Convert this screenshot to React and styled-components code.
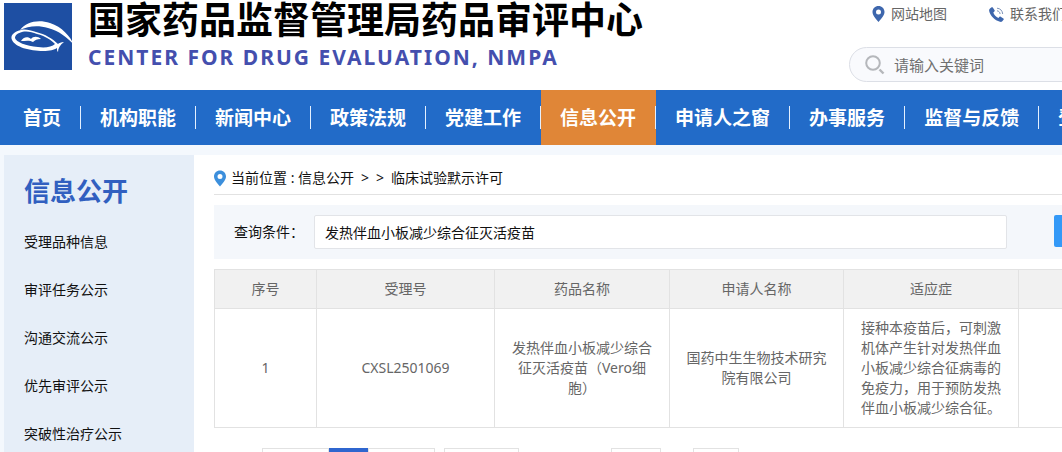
import styled, { createGlobalStyle } from "styled-components";

const GlobalStyle = createGlobalStyle`
  * {
    box-sizing: border-box;
  }
  body {
    margin: 0;
    overflow: hidden;
    background-color: #f4f8fd;
    color: #111;
    font-family: "Noto Sans", "Noto Sans CJK SC", sans-serif;
    font-size: 14px;
    line-height: 20px;
  }
  button,
  input {
    font: inherit;
    color: inherit;
  }
  a {
    color: inherit;
    text-decoration: none;
  }
`;

const Page = styled.div`
  min-width: 1200px;
`;

const Header = styled.header`
  display: flex;
  justify-content: space-between;
  height: 90px;
  padding-left: 4px;
  background-color: #fff;
`;

const Brand = styled.div`
  display: flex;
  gap: 16px;
  padding-top: 3px;
`;

const BrandText = styled.div`
  display: flex;
  flex-direction: column;
  white-space: nowrap;
`;

const BrandTitle = styled.h1`
  margin: 0;
  color: #000;
  font-size: 37px;
  font-weight: 700;
  line-height: 34px;
`;

const BrandSub = styled.p`
  margin: 6px 0 0;
  color: #444fae;
  font-size: 21px;
  font-weight: 700;
  letter-spacing: 2px;
  line-height: 28px;
`;

const Tools = styled.div`
  width: 351px;
`;

const ToolLinks = styled.div`
  display: flex;
  gap: 42px;
  height: 47px;
  padding: 4px 0 0 23px;
`;

const ToolLink = styled.a`
  display: flex;
  gap: 6px;
  height: 20px;
  align-items: center;
  color: #666;
`;

const SearchBox = styled.label`
  display: flex;
  align-items: center;
  gap: 9px;
  height: 35px;
  padding-left: 15px;
  border: 1px solid #dcdfe6;
  border-radius: 18px;
  background-color: #f9fafd;
`;

const SearchInput = styled.input`
  flex: 1;
  padding: 0;
  border: 0;
  outline: 0;
  background: transparent;
  font-size: 15px;
  &::placeholder {
    color: #707070;
    opacity: 1;
  }
`;

const Nav = styled.nav`
  display: flex;
  height: 55px;
  padding-left: 4px;
  background-color: #226bc8;
`;

const NavItem = styled.a`
  display: flex;
  align-items: center;
  padding-left: 19px;
  background-color: ${(props) => (props.$active ? "#e08637" : "transparent")};
  color: #fff;
  font-size: 19px;
  font-weight: 700;
  white-space: nowrap;
  &:after {
    content: "";
    width: 1px;
    height: 23px;
    margin-left: 19px;
    background-color: #e4f0ff;
  }
`;

const Body = styled.div`
  display: flex;
  padding: 10px 0 0 4px;
`;

const Sidebar = styled.aside`
  width: 190px;
  min-height: 480px;
  padding: 21px 20px 0;
  background-color: #e6eef8;
`;

const SidebarTitle = styled.h2`
  margin: 0 0 24px;
  color: #315fc0;
  font-size: 26px;
  font-weight: 700;
  line-height: 30px;
`;

const SidebarLink = styled.a`
  display: block;
  height: 48px;
  line-height: 24px;
`;

const Main = styled.main`
  flex: 1;
  padding: 12px 0 0 20px;
  background-color: #fff;
`;

const Breadcrumb = styled.div`
  display: flex;
  align-items: center;
  height: 28px;
  padding-bottom: 5px;
  border-bottom: 1px solid #e2e2e2;
`;

const Crumbs = styled.div`
  display: flex;
  gap: 7px;
  margin-left: 5px;
`;

const Filter = styled.form`
  display: flex;
  align-items: flex-start;
  margin: 10px 0;
  padding: 10px 20px;
  background-color: #f4f7fb;
`;

const FilterLabel = styled.label`
  width: 80px;
  line-height: 34px;
`;

const FilterInput = styled.input`
  flex: 1;
  height: 34px;
  padding: 0 10px;
  border: 1px solid #e2e4e8;
  border-radius: 2px;
  outline: 0;
  background-color: #fff;
`;

const FilterButton = styled.button`
  width: 126px;
  height: 32px;
  margin-left: 47px;
  border: 0;
  border-radius: 2px;
  background-color: #3399f7;
`;

const Table = styled.table`
  width: 100%;
  border-collapse: collapse;
  table-layout: fixed;
  color: #666;
  text-align: center;
`;

const Col = styled.col`
  width: ${(props) => (props.$width ? `${props.$width}px` : "auto")};
`;

const HeadCell = styled.th`
  padding: 9px 15px;
  border: 1px solid #e2e2e2;
  background-color: #f1f1f1;
  font-weight: 400;
`;

const Cell = styled.td`
  padding: 9px 15px;
  border: 1px solid #e2e2e2;
`;

const Pager = styled.div`
  display: flex;
  margin-top: 20px;
  padding-left: 48px;
`;

const PageButton = styled.button`
  width: ${(props) => props.$width}px;
  height: 28px;
  padding: 0;
  border: 1px solid ${(props) => (props.$active ? "#2f66cf" : "#e2e2e2")};
  background-color: ${(props) => (props.$active ? "#2f66cf" : "#fff")};
`;

const PageLimit = styled.select`
  width: 75px;
  height: 28px;
  margin-left: 9px;
  border: 1px solid #e2e2e2;
  background-color: #fff;
  appearance: none;
`;

const PageInput = styled.input`
  width: 50px;
  height: 28px;
  margin: 0 32px 0 92px;
  border: 1px solid #e2e2e2;
`;

const navItems = [
  "首页",
  "机构职能",
  "新闻中心",
  "政策法规",
  "党建工作",
  "信息公开",
  "申请人之窗",
  "办事服务",
  "监督与反馈",
  "登记备案平台",
];

const sideItems = [
  "受理品种信息",
  "审评任务公示",
  "沟通交流公示",
  "优先审评公示",
  "突破性治疗公示",
];

const columns = [
  { title: "序号", width: 102 },
  { title: "受理号", width: 178 },
  { title: "药品名称", width: 175 },
  { title: "申请人名称", width: 174 },
  { title: "适应症", width: 175 },
  { title: "" },
];

const rows = [
  [
    "1",
    "CXSL2501069",
    "发热伴血小板减少综合征灭活疫苗（Vero细胞）",
    "国药中生生物技术研究院有限公司",
    "接种本疫苗后，可刺激机体产生针对发热伴血小板减少综合征病毒的免疫力，用于预防发热伴血小板减少综合征。",
    "",
  ],
];

function Logo() {
  return (
    <svg width="68" height="67" viewBox="0 0 68 67" overflow="visible">
      <rect width="68" height="67" fill="#1e4fa3" />
      <path
        d="M16 27C22 19 34 16 46 20C58 24 66 33 70 42C63 34 55 28 44 25C34 22 24 23 16 27Z"
        fill="#fff"
      />
      <path
        fillRule="evenodd"
        d="M17 27C9 29 6 33 8 37C11 44 26 48 39 48C46 48 50 47 53 45C53 47 53 48 54 49C54 45 56 42 60 39C57 39 55 40 54 41C49 36 41 31 32 29C26 27 21 26 17 27ZM18 29C23 28 28 29 33 31C41 33 47 37 51 41C48 44 41 45 34 44C22 43 12 39 11 35C11 32 14 30 18 29Z"
        fill="#fff"
      />
      <path
        d="M17 38C19 34 24 33 27 36C29 33 34 33 37 36C33 36 31 37 29 39C26 37 21 38 17 38Z"
        fill="#fff"
      />
    </svg>
  );
}

function PinIcon({ color, width, height }) {
  return (
    <svg width={width} height={height} viewBox="0 0 12 16">
      <path
        fillRule="evenodd"
        d="M6 0C2.6 0 0 2.6 0 6C0 9.6 3.2 12.4 6 16C8.8 12.4 12 9.6 12 6C12 2.6 9.4 0 6 0ZM6 3.5A2.5 2.5 0 1 1 6 8.5A2.5 2.5 0 1 1 6 3.5Z"
        fill={color}
      />
    </svg>
  );
}

function PhoneIcon() {
  return (
    <svg width="15" height="15" viewBox="0 0 15 15">
      <path
        d="M1 1.6L2.6 0.3C3 0 3.5 0.1 3.8 0.5L5.6 3.2C5.9 3.6 5.8 4 5.4 4.4L4.3 5.4C5 7.6 7.1 9.9 9.4 10.9L10.5 9.8C10.9 9.4 11.3 9.4 11.7 9.7L14.4 11.4C14.9 11.7 15 12.2 14.7 12.6L13.3 14.2C12.8 14.8 12 15 11 14.8C5.8 13.6 0.9 8.4 0.1 3.8C0 2.9 0.3 2.2 1 1.6Z"
        fill="#3e67ad"
      />
      <path
        d="M8 1.2C11.2 1.4 13.4 3.6 13.7 7M8 3.8C9.8 4 10.9 5.2 11.1 7"
        fill="none"
        stroke="#7d93b8"
      />
    </svg>
  );
}

function SearchIcon() {
  return (
    <svg width="20" height="20" viewBox="0 0 20 20" fill="none" stroke="#b5b7bb" strokeWidth="2">
      <circle cx="8" cy="8" r="6.8" />
      <path d="M14.5 14.5L18.5 18.5" strokeWidth="2.4" />
    </svg>
  );
}

export default function App() {
  return (
    <Page>
      <GlobalStyle />
      <Header>
        <Brand>
          <Logo />
          <BrandText>
            <BrandTitle>国家药品监督管理局药品审评中心</BrandTitle>
            <BrandSub>CENTER FOR DRUG EVALUATION, NMPA</BrandSub>
          </BrandText>
        </Brand>
        <Tools>
          <ToolLinks>
            <ToolLink href="#">
              <PinIcon color="#3e67ad" width={13} height={16} />
              网站地图
            </ToolLink>
            <ToolLink href="#">
              <PhoneIcon />
              联系我们
            </ToolLink>
          </ToolLinks>
          <SearchBox>
            <SearchIcon />
            <SearchInput type="text" placeholder="请输入关键词" />
          </SearchBox>
        </Tools>
      </Header>

      <Nav>
        {navItems.map((item) => (
          <NavItem key={item} href="#" $active={item === "信息公开"}>
            {item}
          </NavItem>
        ))}
      </Nav>

      <Body>
        <Sidebar>
          <SidebarTitle>信息公开</SidebarTitle>
          {sideItems.map((item) => (
            <SidebarLink key={item} href="#">
              {item}
            </SidebarLink>
          ))}
        </Sidebar>

        <Main>
          <Breadcrumb>
            <PinIcon color="#3c8fdc" width={12} height={17} />
            <Crumbs>
              <span>当前位置 : 信息公开</span>
              <span>&gt;</span>
              <span>&gt;</span>
              <a href="#">临床试验默示许可</a>
            </Crumbs>
          </Breadcrumb>

          <Filter>
            <FilterLabel htmlFor="keyword">查询条件：</FilterLabel>
            <FilterInput
              id="keyword"
              type="text"
              defaultValue="发热伴血小板减少综合征灭活疫苗"
            />
            <FilterButton type="button" aria-label="查询" />
          </Filter>

          <Table>
            <colgroup>
              {columns.map((column, i) => (
                <Col key={i} $width={column.width} />
              ))}
            </colgroup>
            <thead>
              <tr>
                {columns.map((column, i) => (
                  <HeadCell key={i}>{column.title}</HeadCell>
                ))}
              </tr>
            </thead>
            <tbody>
              {rows.map((row) => (
                <tr key={row[0]}>
                  {row.map((value, i) => (
                    <Cell key={i}>{value}</Cell>
                  ))}
                </tr>
              ))}
            </tbody>
          </Table>

          <Pager>
            <PageButton $width={67} aria-label="上一页" />
            <PageButton $width={39} $active aria-label="当前页" />
            <PageButton $width={67} aria-label="下一页" />
            <PageLimit aria-label="每页条数" />
            <PageInput type="text" aria-label="页码" />
            <PageButton $width={46} aria-label="确定" />
          </Pager>
        </Main>
      </Body>
    </Page>
  );
}
